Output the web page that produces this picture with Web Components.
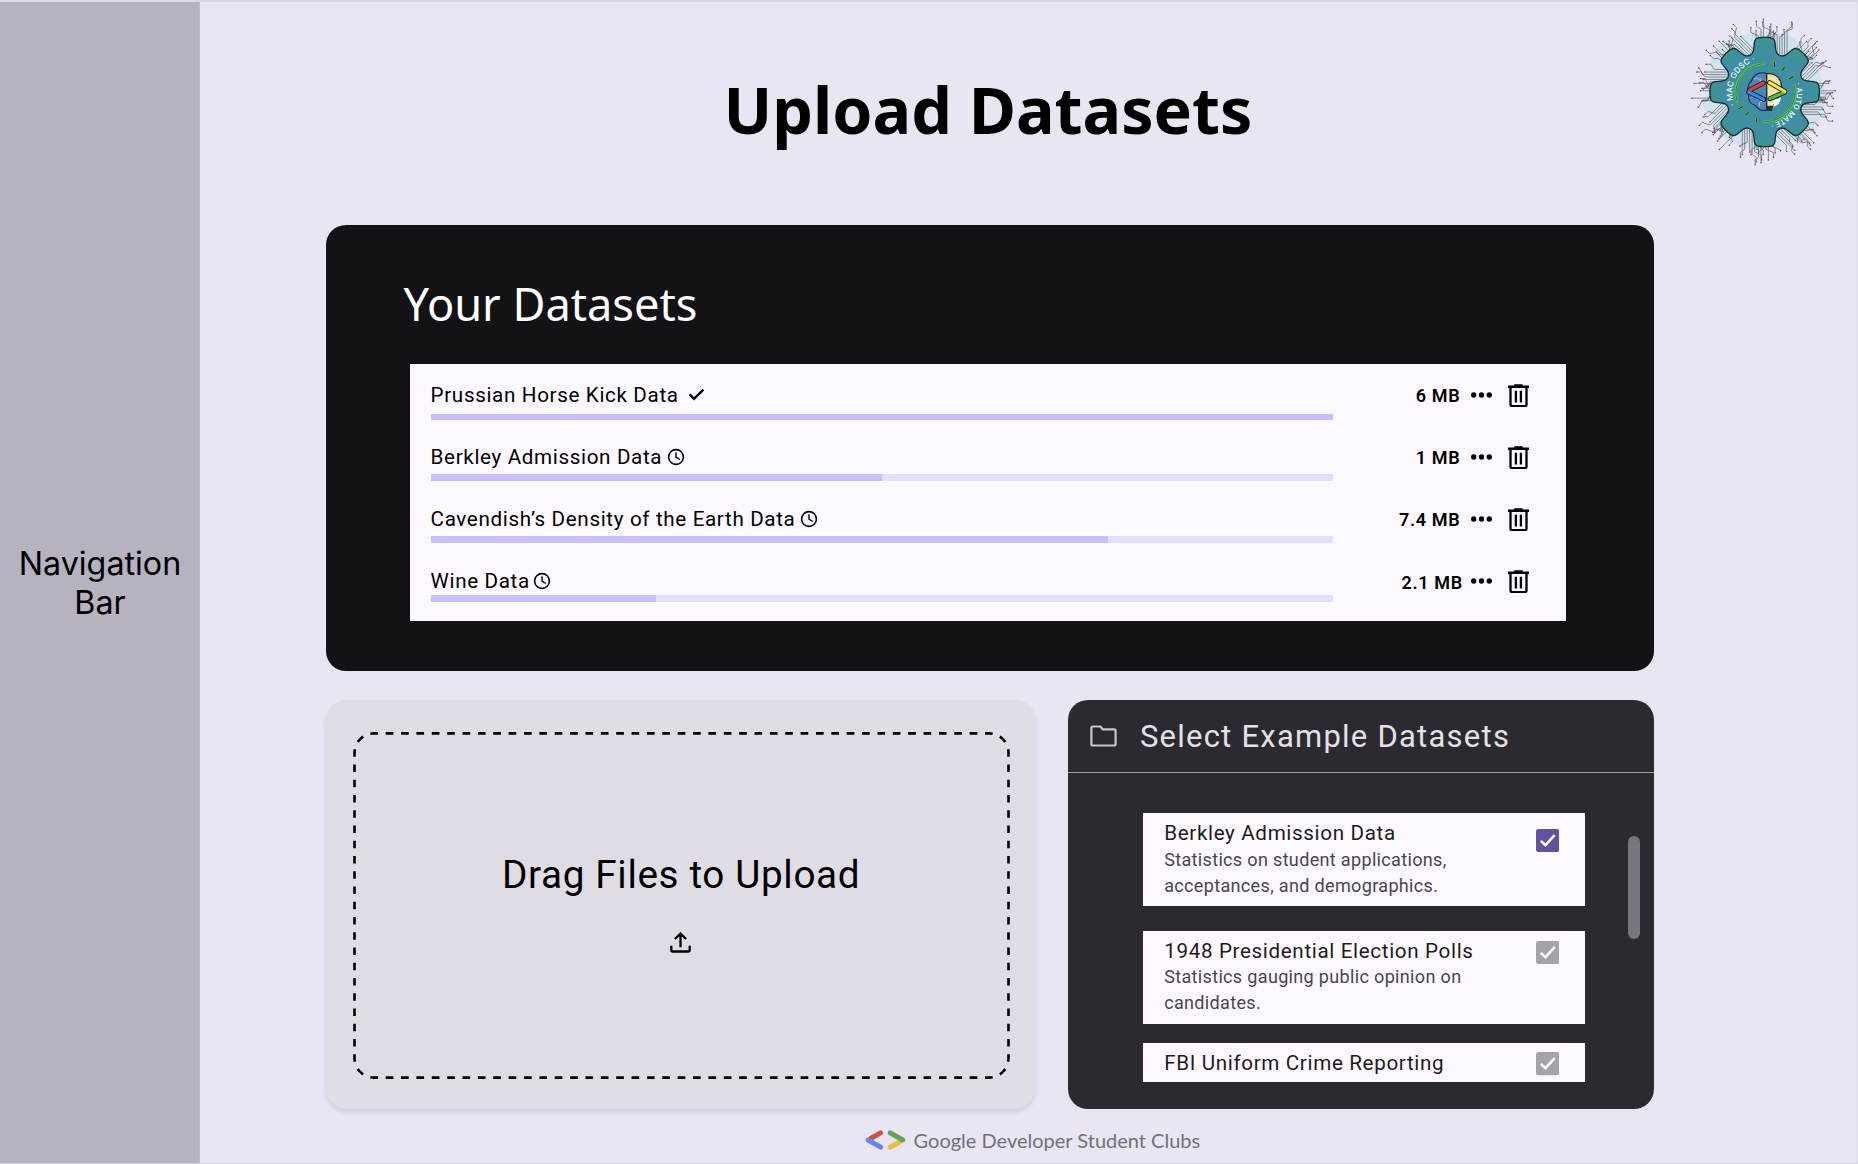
<!DOCTYPE html>
<html lang="en">
<head>
<meta charset="utf-8">
<title>Upload Datasets</title>
<style>
  html, body { margin: 0; height: 100%; }
  body { background: #e9e5f3; font-family: Roboto, "Liberation Sans", sans-serif; color: #000; overflow: hidden; }
</style>
</head>
<body>
<app-shell>
  <nav-rail slot="nav">Navigation<br>Bar</nav-rail>
  <page-header slot="header">Upload Datasets</page-header>
  <dataset-panel slot="datasets" heading="Your Datasets">
    <dataset-row name="Prussian Horse Kick Data" status="done" size="6 MB" progress="100" style="--bar-gap:6.2px;--icon-gap:7.2px"></dataset-row>
    <dataset-row name="Berkley Admission Data" status="pending" size="1 MB" progress="50" style="--bar-gap:4.8px"></dataset-row>
    <dataset-row name="Cavendish’s Density of the Earth Data" status="pending" size="7.4 MB" progress="75" style="--bar-gap:4.4px"></dataset-row>
    <dataset-row name="Wine Data" status="pending" size="2.1 MB" progress="25" style="--bar-gap:1.9px;--icon-gap:2.2px;--size-gap:8.2px;--size-drop:3px"></dataset-row>
  </dataset-panel>
  <drop-zone slot="upload">Drag Files to Upload</drop-zone>
  <example-panel slot="examples" heading="Select Example Datasets">
    <example-item name="Berkley Admission Data" checked style="--box-top:15.7px;--pad-top:7.4px;--sub-gap:.6px;height:93px">Statistics on student applications, acceptances, and demographics.</example-item>
    <example-item name="1948 Presidential Election Polls" style="--box-top:10.5px;--pad-top:7.3px;--sub-gap:.5px;height:93px;margin-top:24.5px">Statistics gauging public opinion on candidates.</example-item>
    <example-item name="FBI Uniform Crime Reporting" style="--box-top:9.3px;--pad-top:7px;height:38.5px;margin-top:19.5px"></example-item>
  </example-panel>
  <club-footer slot="footer">Google Developer Student Clubs</club-footer>
</app-shell>

<script>
class Base extends HTMLElement {
  connectedCallback() {
    if (this.shadowRoot) return;
    this.attachShadow({ mode: 'open' }).innerHTML = this.render();
  }
  attr(n) { return this.getAttribute(n) || ''; }
}

customElements.define('app-shell', class extends Base {
  render() {
    return `<style>
      :host { display: flex; box-sizing: border-box; width: 1858px; height: 1164px; border-top: 2px solid #dbd6e8; border-bottom: 1px solid #d8d3e2; border-right: 1px solid #dcd7e8; background: #e9e5f3; }
      main { flex: 1; display: flex; flex-direction: column; min-width: 0; }
      .content { width: 1328.4px; margin-left: 126px; display: flex; flex-direction: column; gap: 28.7px; }
      .lower { display: flex; gap: 32.3px; height: 409px; }
    </style>
    <slot name="nav"></slot>
    <main>
      <slot name="header"></slot>
      <div class="content">
        <slot name="datasets"></slot>
        <div class="lower"><slot name="upload"></slot><slot name="examples"></slot></div>
      </div>
      <slot name="footer"></slot>
    </main>`;
  }
});

customElements.define('nav-rail', class extends Base {
  render() {
    return `<style>
      :host { display: flex; align-items: center; justify-content: center; box-sizing: border-box; width: 200px; flex: none; background: #b6b2bf; border-right: 1px solid #c0bbca; font: 400 32.25px/39px Inter, sans-serif; text-align: center; }
      p { margin: 1px 0 0 1px; }
    </style><p><slot></slot></p>`;
  }
});

customElements.define('page-header', class extends Base {
  render() {
    return `<style>
      :host { display: flex; height: 223px; flex: none; }
      h1 { margin: 67px 0 0 126px; width: 1324px; flex: none; text-align: center; font: 700 64.5px/80px "Noto Sans", sans-serif; }
      club-emblem { margin: 8px 0 0 30px; }
    </style><h1><slot></slot></h1><club-emblem></club-emblem>`;
  }
});

/* Gear emblem with radiating circuit traces, drawn on a 510 x 495 grid. */
customElements.define('club-emblem', class extends Base {
  gear(cx, cy) {
    const pts = [];
    const N = 720;
    for (let i = 0; i < N; i++) {
      const a = i / N * 2 * Math.PI;
      const u = Math.cos(8 * a);
      const w = a + 0.022 * Math.sin(16 * a);
      const t = Math.tanh(1.6 * (u + 0.45));
      const r = 119 + 45 * (t + 0.706) / 1.687;
      pts.push((cx + r * Math.cos(w)).toFixed(1) + ' ' + (cy + r * Math.sin(w)).toFixed(1));
    }
    return 'M' + pts.join('L') + 'Z';
  }
  traces(cx, cy) {
    let d = '', dots = '';
    const len = [212, 192, 222, 202, 186, 230, 198];
    for (let k = 0; k < 16; k++) {
      const a = (k * 22.5) * Math.PI / 180;
      const snap = Math.round(k / 2 - 0.01) * 45 * Math.PI / 180;
      const ux = Math.cos(snap), uy = Math.sin(snap), vx = -uy, vy = ux;
      const n = 8, m = (n - 1) / 2;
      for (let j = 0; j < n; j++) {
        const o = (j - m) * 7.4;
        const bx = cx + 108 * Math.cos(a) + o * vx, by = cy + 108 * Math.sin(a) + o * vy;
        const L = len[(j * 3 + k * 2) % 7] - 122;
        const out = (j < m ? -1 : 1);
        const bend = ((j + k) % 3 === 0) ? 0 : out * (10 + (j * 5 + k * 3) % 14);
        const x1 = bx + ux * L * .8, y1 = by + uy * L * .8;
        const x2 = x1 + ux * 10 + vx * bend, y2 = y1 + uy * 10 + vy * bend;
        const t = (j * 7 + k * 5) % 4 ? 14 : 2;
        const x3 = x2 + ux * t, y3 = y2 + uy * t;
        d += `M${bx.toFixed(1)} ${by.toFixed(1)}L${x1.toFixed(1)} ${y1.toFixed(1)}L${x2.toFixed(1)} ${y2.toFixed(1)}L${x3.toFixed(1)} ${y3.toFixed(1)}`;
        dots += `<circle cx="${x3.toFixed(1)}" cy="${y3.toFixed(1)}" r="2.2"/>`;
      }
    }
    return `<path d="${d}" fill="none" stroke="#3d3a44" stroke-width="2.1" stroke-opacity=".78"/><g fill="#55515c">${dots}</g>`;
  }
  render() {
    const g = this.gear(254, 246);
    const ticks = 'M283 157l1 12M313 172l-6 9M338 200l-10 6M176 296l11-6M198 315l7-9M229 336l1-12';
    return `<style>:host { display: block; width: 170px; height: 165px; flex: none; } svg { display: block; }
      text { font: 500 24px Inter, sans-serif; fill: #f2fbfb; letter-spacing: .5px; }</style>
    <svg width="170" height="165" viewBox="0 0 510 495">
      <defs>
        <radialGradient id="f" gradientUnits="userSpaceOnUse" cx="254" cy="246" r="166"><stop offset=".86" stop-color="#3f8fa3"/><stop offset="1" stop-color="#379c80"/></radialGradient>
        <path id="ring" d="M254 343 A97 97 0 0 1 254 149 A97 97 0 0 1 254 343 A97 97 0 0 1 254 149"/>
      </defs>
      <path d="M92 150Q120 80 205 72Q300 52 352 92Q412 120 418 190Q450 260 424 320Q400 380 330 398Q270 432 190 412Q110 390 96 322Q52 300 84 240Z" fill="#cfe3ec" fill-opacity=".85"/>
      ${this.traces(254, 246)}
      <path d="${g}" fill="url(#f)" stroke="#152a30" stroke-width="4"/>
      <g fill="none" stroke-linecap="round">
        <path d="M172 276A87 87 0 0 1 252 161M344 226A90 90 0 0 1 254 335" stroke="#5fd13a" stroke-width="7"/>
        <path d="M172 276A87 87 0 0 1 252 161M344 226A90 90 0 0 1 254 335" stroke="#1f5a2a" stroke-width="2"/>
        <path d="${ticks}" stroke="#5bbf45" stroke-width="6"/>
        <path d="${ticks}" stroke="#173f28" stroke-width="3.5"/>
      </g>
      <text><textPath href="#ring" startOffset="112">· MAC GDSC ·</textPath></text>
      <text style="font-size:22px"><textPath href="#ring" startOffset="430">· AUTO MATE ·</textPath></text>
      <path d="M260 190C240 184 220 194 216 210C202 222 200 244 206 256C204 276 218 284 226 286C232 298 246 304 260 300Z" fill="#4b86b4" stroke="#172c4a" stroke-width="3.5"/>
      <path d="M222 208q12-10 16 4M214 262q14-8 18 8M240 290q-8-14 6-16M244 204q-8 4 0 12" fill="none" stroke="#a9d0ea" stroke-width="3"/>
      <path d="M260 191C292 188 308 212 304 238C300 262 286 272 280 288L260 290Z" fill="#f7e3a4" stroke="#2b2a25" stroke-width="3.5"/>
      <path d="M282 270L303 262Q302 284 280 290Z" fill="#fff"/>
      <path d="M258 288H279L276 303H262Z" fill="#26333b"/>
      <path d="M260 190V303" stroke="#1d2933" stroke-width="3"/>
      <g fill="none" stroke-linecap="round" stroke="#16202a" stroke-width="15"><path d="M209 240L250 219M206 246L251 268M270 266L313 247M269 218L314 244"/></g>
      <g fill="none" stroke-linecap="round" stroke-width="9.5">
        <path d="M209 240L250 219" stroke="#e23b36"/><path d="M206 246L251 268" stroke="#2f8df0"/>
        <path d="M270 266L313 247" stroke="#4cc242"/><path d="M269 218L314 244" stroke="#f7e63a"/>
      </g>
    </svg>`;
  }
});

customElements.define('dataset-panel', class extends Base {
  render() {
    return `<style>
      :host { display: block; box-sizing: border-box; height: 446px; padding: 49px 0 0 77.6px; border-radius: 20px; background: #131217; }
      h2 { margin: 0; color: #fff; font: 400 45.15px/60px "Noto Sans", sans-serif; }
      .list { margin: 30.4px 0 0 6.4px; width: 1155.6px; height: 257px; background: #fdf8ff; }
    </style><h2>${this.attr('heading')}</h2><div class="list"><slot></slot></div>`;
  }
});

customElements.define('status-icon', class extends Base {
  render() {
    const done = this.attr('kind') === 'done';
    return `<style>:host { display: block; } svg { display: block; }</style>
    <svg width="20" height="20" viewBox="0 0 20 20" fill="none" stroke="#000">${done
      ? '<path d="M3.6 9.4L8 13.9L17.4 4.7" stroke-width="2.4"/>'
      : '<circle cx="10" cy="10" r="7.4" stroke-width="1.6"/><path d="M10 5.2V10.2L13.8 12.5" stroke-width="1.4"/>'}</svg>`;
  }
});

customElements.define('dataset-row', class extends Base {
  render() {
    return `<style>
      :host { display: flex; height: 62px; padding: 0 36.1px 0 20.6px; }
      .info { width: 902.7px; padding-top: 17.2px; }
      .name { display: flex; font-size: 20.64px; line-height: 26px; letter-spacing: .645px; white-space: nowrap; }
      status-icon { margin: 3.9px 0 0 var(--icon-gap, 3.7px); }
      .bar { height: 6.6px; margin-top: var(--bar-gap); background: #e6deff; }
      .fill { height: 100%; width: ${this.attr('progress')}%; background: #cbbdfb; }
      .tools { flex: 1; display: flex; align-items: center; justify-content: flex-end; }
      .size { font-weight: 600; font-size: 18.06px; letter-spacing: .645px; margin-right: var(--size-gap, 10.6px); padding-top: var(--size-drop, 1px); }
      .dots { margin-right: 16.5px; }
    </style>
    <div class="info">
      <div class="name">${this.attr('name')}<status-icon kind="${this.attr('status')}"></status-icon></div>
      <div class="bar"><div class="fill"></div></div>
    </div>
    <div class="tools">
      <span class="size">${this.attr('size')}</span>
      <svg class="dots" width="21" height="6" viewBox="0 0 21 6"><circle cx="2.7" cy="3" r="2.65"/><circle cx="10.5" cy="3" r="2.65"/><circle cx="18.3" cy="3" r="2.65"/></svg>
      <svg width="21" height="23.4" viewBox="0 0 21 23.4"><path d="M0 1.5H6.2V.2H14.7V1.5H21V3.9H0Z"/><path d="M2.5 3V20.6Q2.5 22.2 4.1 22.2H16.9Q18.5 22.2 18.5 20.6V3M7.9 6.7V18.4M12.9 6.7V18.4" fill="none" stroke="#000" stroke-width="2.3"/></svg>
    </div>`;
  }
});

customElements.define('drop-zone', class extends Base {
  render() {
    // Each side runs from corner midpoint to corner midpoint so the dashes stay symmetric.
    const x = 28.5, y = 33.4, w = 654, h = 344.2, r = 19.5, k = r * (1 - Math.SQRT1_2);
    const X = x + w, Y = y + h;
    const A = `A${r} ${r} 0 0 1 `;
    const top = `M${x + k} ${y + k}${A}${x + r} ${y}H${X - r}${A}${X - k} ${y + k}`;
    const right = `M${X - k} ${y + k}${A}${X} ${y + r}V${Y - r}${A}${X - k} ${Y - k}`;
    const bottom = `M${X - k} ${Y - k}${A}${X - r} ${Y}H${x + r}${A}${x + k} ${Y - k}`;
    const left = `M${x + k} ${Y - k}${A}${x} ${Y - r}V${y + r}${A}${x + k} ${y + k}`;
    const side = (d, n) => `<path d="${d}" pathLength="${n * 2}" stroke-dasharray="1 1" stroke-dashoffset=".5"/>`;
    return `<style>
      :host { display: flex; flex-direction: column; align-items: center; position: relative; box-sizing: border-box; width: 709.3px; padding-top: 152.7px; border-radius: 21px; background: #dfdce6; box-shadow: 0 3px 5px rgba(60,50,80,.13); }
      .frame { position: absolute; inset: 0; }
      p { margin: 0 0 34px 1px; font-size: 38.7px; line-height: 46px; letter-spacing: .64px; }
    </style>
    <svg class="frame" width="709" height="409" fill="none" stroke="#000" stroke-width="2.6">${side(top, 42) + side(right, 22) + side(bottom, 42) + side(left, 22)}</svg>
    <p><slot></slot></p>
    <svg width="21" height="21" viewBox="0 0 21 21" fill="none" stroke="#000" stroke-width="2.3"><path d="M1.3 13.8V17.9Q1.3 19.5 2.9 19.5H18.1Q19.7 19.5 19.7 17.9V13.8M10.5 15.2V2.2M4.9 7L10.5 1.6L16.1 7"/></svg>`;
  }
});

customElements.define('example-panel', class extends Base {
  render() {
    return `<style>
      :host { display: block; position: relative; flex: 1; border-radius: 20px; background: #2b2a30; overflow: hidden; }
      header { display: flex; align-items: center; box-sizing: border-box; height: 73px; padding-left: 22.9px; border-bottom: 1px solid #a19da6; }
      h2 { margin: 3px 0 0 22.4px; font-weight: 400; font-size: 30.96px; line-height: 36px; letter-spacing: 1.26px; color: #e6e0e9; }
      .list { margin: 40.4px 0 0 75.9px; width: 441.6px; }
      .thumb { position: absolute; top: 136.6px; left: 560.8px; width: 11.6px; height: 103px; border-radius: 6px; background: #79757f; }
    </style>
    <header>
      <svg width="27" height="22" viewBox="0 0 27 22" fill="none" stroke="#cac4d0" stroke-width="2.2"><path d="M1.4 3Q1.4 1.5 2.9 1.5H10.3L12.9 4.3H24.1Q25.6 4.3 25.6 5.8V19Q25.6 20.5 24.1 20.5H2.9Q1.4 20.5 1.4 19Z"/></svg>
      <h2>${this.attr('heading')}</h2>
    </header>
    <div class="list"><slot></slot></div>
    <div class="thumb"></div>`;
  }
});

customElements.define('check-box', class extends Base {
  render() {
    return `<style>:host { display: block; width: 23.2px; height: 23.2px; } svg { display: block; }</style>
    <svg width="23.2" height="23.2" viewBox="0 0 23.2 23.2"><rect width="23.2" height="23.2" rx="2.6" fill="${this.hasAttribute('on') ? '#65519f' : '#a5a2a9'}"/><path d="M4.8 11.8L9.5 16.2L18.6 6.2" fill="none" stroke="#fff" stroke-width="2.5"/></svg>`;
  }
});

customElements.define('example-item', class extends Base {
  render() {
    return `<style>
      :host { display: flex; justify-content: space-between; box-sizing: border-box; padding: 0 26.2px 0 20.7px; background: #fdf8ff; }
      .text { width: 320px; padding-top: var(--pad-top, 8px); line-height: 26px; }
      h3 { margin: 0; font-weight: 400; font-size: 20.64px; letter-spacing: .645px; color: #1d1b20; }
      p { margin: var(--sub-gap, 0) 0 0; font-size: 18.06px; letter-spacing: .3225px; color: #49454f; }
      check-box { margin-top: var(--box-top); }
    </style>
    <div class="text"><h3>${this.attr('name')}</h3><p><slot></slot></p></div>
    <check-box${this.hasAttribute('checked') ? ' on' : ''}></check-box>`;
  }
});

customElements.define('club-footer', class extends Base {
  render() {
    return `<style>
      :host { display: flex; align-items: center; margin: 18px 0 0 664.6px; height: 26px; gap: 8px; font: 400 20px/26px Lato, "Open Sans", sans-serif; color: #6f727b; white-space: nowrap; }
      svg { margin-top: 1px; }
    </style>
    <svg width="41" height="20" viewBox="0 0 41 20" fill="none" stroke-width="5" stroke-linecap="round"><path d="M6 8.2L15.6 2.9" stroke="#c95440"/><path d="M3 10L15.6 17.2" stroke="#6688ea"/><path d="M25.2 17.2L34.7 12" stroke="#eabd43"/><path d="M25.2 2.9L37.8 10" stroke="#62a556"/></svg>
    <span><slot></slot></span>`;
  }
});
</script>
</body>
</html>
